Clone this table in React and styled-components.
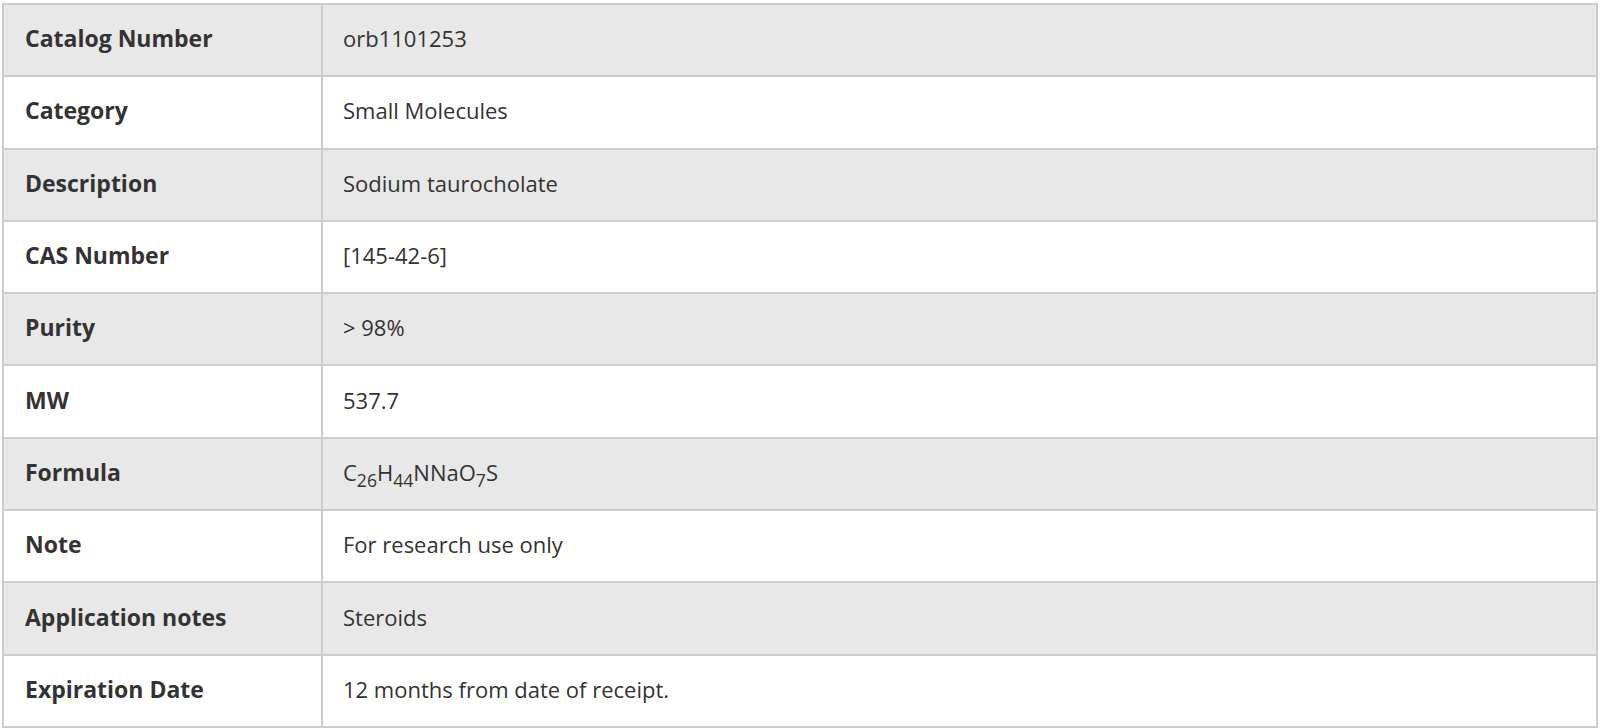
import styled, { createGlobalStyle } from "styled-components";

const GlobalStyle = createGlobalStyle`
  html, body {
    margin: 0;
    padding: 0;
    background: #ffffff;
  }
  body {
    font-family: "Open Sans", "Liberation Sans", sans-serif;
    color: #333333;
  }
`;

const Wrapper = styled.div`
  padding: 3px 2px 2px 2px;
`;

const SpecTable = styled.table`
  width: 100%;
  border-collapse: collapse;
  border: 2px solid #cccccc;
  font-family: "Open Sans", "Liberation Sans", sans-serif;
  font-size: 22px;
  color: #333333;
`;

const Row = styled.tr`
  height: 72.3px;
  background: ${({ $shaded }) => ($shaded ? "#e8e8e8" : "#ffffff")};
`;

const Label = styled.th`
  width: 274px;
  padding: 0 22px 4px 21px;
  text-align: left;
  font-size: 23px;
  font-weight: 700;
  border: 2px solid #cccccc;
`;

const Value = styled.td`
  padding: 0 22px 4px 20px;
  font-weight: 400;
  border: 2px solid #cccccc;

  sub {
    font-size: 0.8em;
    vertical-align: -0.35em;
    line-height: 0;
  }
`;

const specs = [
  { label: "Catalog Number", value: "orb1101253" },
  { label: "Category", value: "Small Molecules" },
  { label: "Description", value: "Sodium taurocholate" },
  { label: "CAS Number", value: "[145-42-6]" },
  { label: "Purity", value: "> 98%" },
  { label: "MW", value: "537.7" },
  {
    label: "Formula",
    value: (
      <>
        C<sub>26</sub>H<sub>44</sub>NNaO<sub>7</sub>S
      </>
    ),
  },
  { label: "Note", value: "For research use only" },
  { label: "Application notes", value: "Steroids" },
  { label: "Expiration Date", value: "12 months from date of receipt." },
];

export default function App() {
  return (
    <Wrapper>
      <GlobalStyle />
      <SpecTable>
        <tbody>
          {specs.map((item, i) => (
            <Row key={item.label} $shaded={i % 2 === 0}>
              <Label>{item.label}</Label>
              <Value>{item.value}</Value>
            </Row>
          ))}
        </tbody>
      </SpecTable>
    </Wrapper>
  );
}
